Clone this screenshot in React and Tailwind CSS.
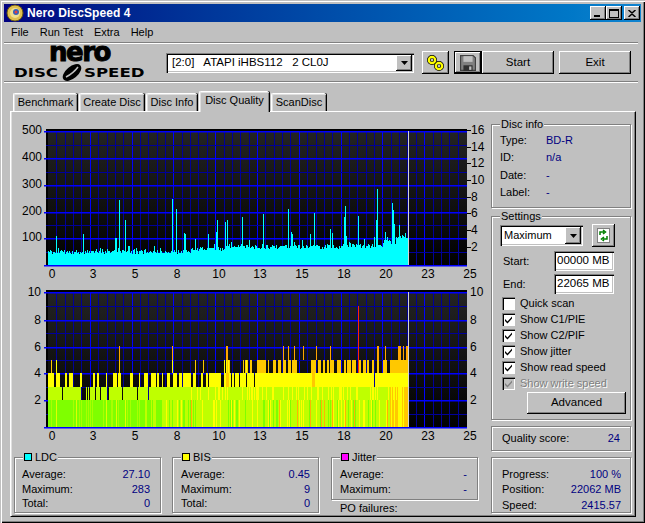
import React from 'react'

const raised = "bg-[#c0c0c0] shadow-[inset_-1px_-1px_0_#000,inset_1px_1px_0_#fff,inset_-2px_-2px_0_#808080]"
const sunken = "bg-white shadow-[inset_1px_1px_0_#808080,inset_2px_2px_0_#000,inset_-1px_-1px_0_#fff,inset_-2px_-2px_0_#c0c0c0]"
const xLabels = [[52, '0'], [93, '3'], [135, '5'], [177, '8'], [219, '10'], [260, '13'], [302, '15'], [344, '18'], [386, '20'], [428, '23'], [470, '25']]

// fixed seed so the chart comes out the same each load
function rng(seed) {
  let s = seed
  return () => {
    s = (s * 1664525 + 1013904223) % 4294967296
    return s / 4294967296
  }
}

function inRanges(x, list) {
  return list.some(r => x >= r[0] && x <= r[1])
}

function Grid({ id, top, bottom, majors, minors }) {
  const vlines = []
  for (let k = 1; k < 50; k++) {
    const x = Math.round(48 + 8.36 * k)
    vlines.push(<rect key={k} x={x} y={top} width="1" height={bottom - top} fill={k % 5 === 0 ? '#0000ff' : '#000098'} />)
  }
  return (
    <g>
      <defs>
        <linearGradient id={id} x1="0" y1="0" x2="0" y2="1">
          <stop offset="0" stopColor="#242424" />
          <stop offset="1" stopColor="#000000" />
        </linearGradient>
      </defs>
      <rect x="46" y={top - 2} width="421" height={bottom - top + 3} fill={`url(#${id})`} />
      <rect x="46" y={top - 2} width="421" height="2" fill="#000" />
      <rect x="46" y={top} width="2" height={bottom - top + 1} fill="#000" />
      {vlines}
      {minors.map(y => <rect key={y} x="46" y={y} width="421" height="1" fill="#000098" />)}
      <g shapeRendering="auto">
        {majors.map(y => <rect key={y} x="44" y={y} width="423" height="1.5" fill="#0000ff" />)}
      </g>
    </g>
  )
}

const ldcSpikes = [[56, 236], [83, 234], [115, 238], [116, 238], [119, 200], [125, 220], [129, 246], [172, 199], [176, 209], [184, 233], [185, 234], [195, 239], [208, 234], [216, 232], [217, 220], [225, 222], [227, 220], [242, 217], [263, 214], [288, 209], [291, 232], [292, 234], [314, 213], [310, 234], [330, 229], [332, 233], [344, 217], [345, 206], [346, 236], [358, 216], [364, 239], [376, 220], [377, 189], [374, 237], [385, 232], [392, 203], [393, 210], [394, 224], [399, 225], [402, 235], [405, 233]]

function LdcChart() {
  const r = rng(7)
  const cols = []
  for (let x = 48; x < 408; x++) {
    let base = 252
    if (x > 190) base = 249
    if (x > 225) base = 247
    if (x > 340) base = 246
    if (x > 382) base = 242
    if (x > 395) base = 237
    let top = base + Math.round(r() * 4 - 2)
    if (r() < 0.12) top -= Math.round(r() * 6)
    const spike = ldcSpikes.find(s => s[0] === x)
    if (spike) top = spike[1]
    cols.push(<rect key={x} x={x} y={top} width="1" height={265 - top} fill="#00ffff" />)
  }
  const right = [[130, '16'], [147, '14'], [163, '12'], [180, '10'], [197, '8'], [213, '6'], [230, '4'], [247, '2']]
  return (
    <svg viewBox="12 122 474 162" width="474" height="162" className="block" shapeRendering="crispEdges">
      <Grid id="g1" top={131} bottom={265} majors={[131, 158, 185, 212, 238, 265]} minors={[145, 172, 198, 225, 252]} />
      {cols}
      <rect x="408" y="131" width="1" height="134" fill="#d4d4d4" />
      {right.map(t => <rect key={t[1]} x="467" y={t[0]} width="4" height="1" fill="#000" />)}
      <g fontSize="12" fill="#000" shapeRendering="auto">
        {[[135, '500'], [162, '400'], [189, '300'], [216, '200'], [242, '100']].map(t => <text key={t[1]} x="42" y={t[0]} textAnchor="end" dy="-1">{t[1]}</text>)}
        {right.map(t => <text key={t[1]} x="471" y={t[0] + 4}>{t[1]}</text>)}
        {xLabels.map(t => <text key={t[1]} x={t[0]} y="278" textAnchor="middle">{t[1]}</text>)}
      </g>
    </svg>
  )
}

const level4 = [[48, 49], [50, 53], [56, 59], [65, 66], [69, 72], [80, 81], [93, 94], [97, 98], [106, 106], [113, 116], [118, 120], [130, 132], [139, 139], [144, 147], [151, 152], [153, 155], [157, 158], [162, 162], [167, 168], [169, 169], [173, 176], [179, 181], [183, 187], [188, 190], [193, 194], [195, 195], [201, 202], [206, 207], [209, 220], [224, 230], [232, 233], [235, 238], [240, 245], [247, 250]]
const gap3 = [62, 81, 82, 83, 84, 85, 87, 89, 95, 100, 107, 108, 122, 137, 148]
const level5Left = [51, 56, 119, 172, 195, 203, 224, 226, 227, 228, 229, 243, 245, 246, 247]
const level5Right = [[250, 251], [257, 265], [268, 268], [273, 275], [278, 280], [283, 285], [288, 290], [292, 296], [311, 315], [318, 320], [323, 324], [327, 328], [330, 333], [337, 340], [344, 345], [347, 350], [352, 355], [358, 360], [363, 365], [367, 368], [372, 373], [377, 378], [383, 386], [390, 408]]
const level6 = [119, 172, 226, 227, 283, 288, 294, 303, 316, 330, 377, 378, 385, 398, 399, 400, 403, 406, 407]

function BisChart() {
  const r = rng(41)
  const y = v => 427 - 13.5 * v
  const rects = []
  const band = (x, a, b, fill) => rects.push(<rect key={`${x}-${a}`} x={x} y={y(b)} width="1" height={y(a) - y(b)} fill={fill} />)
  for (let x = 48; x < 408; x++) {
    const p = r()
    const q = r()
    let low = '#7fff00'
    let mid = '#bfff00'
    if (x < 145) {
      if (p < 0.15) low = '#a8ff00'
      if (p > 0.97) low = '#e0ff00'
    } else if (x < 190) {
      if (p < 0.45) low = '#bfff00'
      if (p > 0.9) low = '#ffff00'
    } else if (x < 390) {
      low = '#bfff00'
      if (p < 0.16) low = '#7fff00'
      if (p > 0.84) low = '#ffff00'
      if (p > 0.95) low = '#ffb400'
      if (q < 0.25) mid = '#ffff00'
    } else {
      low = p < 0.5 ? '#ffff00' : '#ffc800'
      mid = p < 0.6 ? '#ffff00' : '#ffc800'
    }
    band(x, 0, 2, low)
    if (!gap3.includes(x)) band(x, 2, 3, mid)
    if (x < 250) {
      if (inRanges(x, level4)) band(x, 3, 4, x > 225 && x < 229 ? '#ffc800' : '#ffff00')
      if (level5Left.includes(x)) band(x, 4, 5, x % 2 ? '#ffc800' : '#ffff00')
    } else {
      if (x !== 254 && x !== 374) band(x, 3, 4, x > 311 && x < 315 ? '#ffc800' : '#ffff00')
      if (inRanges(x, level5Right)) band(x, 4, 5, '#ffc800')
    }
    if (level6.includes(x)) band(x, 5, 6, '#ffa500')
    if (x === 358) band(x, 4, 9, '#ff2800')
  }
  const leftY = [[296, '10'], [324, '8'], [351, '6'], [377, '4'], [404, '2']]
  return (
    <svg viewBox="12 284 474 162" width="474" height="162" className="block" shapeRendering="crispEdges">
      <Grid id="g2" top={292} bottom={427} majors={[292, 320, 347, 373, 400, 427]} minors={[306, 333, 360, 387, 414]} />
      {rects}
      <rect x="408" y="292" width="1" height="135" fill="#d4d4d4" />
      <g fontSize="12" fill="#000" shapeRendering="auto">
        {leftY.map(t => <text key={t[1]} x="41" y={t[0]} textAnchor="end">{t[1]}</text>)}
        {leftY.map(t => <text key={t[1]} x="470" y={t[0]}>{t[1]}</text>)}
        {xLabels.map(t => <text key={t[1]} x={t[0]} y="440" textAnchor="middle">{t[1]}</text>)}
      </g>
    </svg>
  )
}

function Group({ title, swatch, className, children }) {
  return (
    <div className={`relative border border-[#808080] shadow-[inset_1px_1px_0_#fff,1px_1px_0_#fff] ${className}`}>
      {title && (
        <div className="absolute -top-[8px] left-[8px] flex items-center gap-[3px] bg-[#c0c0c0] px-[1px] leading-[14px]">
          {swatch && <span className={`w-[8px] h-[8px] border border-black ${swatch}`}></span>}
          {title}
        </div>
      )}
      {children}
    </div>
  )
}

function StatRow({ label, value }) {
  return (
    <div className="flex justify-between h-[14.5px] leading-[14px]">
      <span>{label}</span>
      <span className="text-[#000080]">{value}</span>
    </div>
  )
}

function Check({ label, checked, disabled }) {
  return (
    <div className={`flex items-center gap-[5px] h-[16px] pl-[2px] ${disabled ? 'text-[#808080] [text-shadow:1px_1px_0_#fff]' : ''}`}>
      <span className={`w-[13px] h-[13px] flex items-center justify-center shadow-[inset_1px_1px_0_#808080,inset_2px_2px_0_#000,inset_-1px_-1px_0_#fff] ${disabled ? 'bg-[#c0c0c0]' : 'bg-white'}`}>
        {checked && (
          <svg width="9" height="9" viewBox="0 0 9 9">
            <path d="M1 4l2.5 2.5L8 1.5v2L3.5 8.5 1 6z" fill={disabled ? '#808080' : '#000'} />
          </svg>
        )}
      </span>
      {label}
    </div>
  )
}

function Tab({ label, w, active }) {
  return (
    <div className={`relative flex items-center justify-center rounded-t-[2px] border-t border-l border-white shadow-[inset_1px_1px_0_#dfdfdf,1px_0_0_#000,inset_-1px_0_0_#808080] bg-[#c0c0c0] ${active ? 'h-[21px] z-10 -mb-[1px] pb-[3px]' : 'h-[18px]'} ${w}`}>
      {label}
    </div>
  )
}

function Arrow() {
  return (
    <svg width="7" height="4" viewBox="0 0 7 4"><path d="M0 0h7L3.5 4z" fill="#000" /></svg>
  )
}

function App() {
  return (
    <div className="w-[645px] h-[523px] overflow-hidden bg-[#c0c0c0] p-[4px] text-[11px] text-black font-['Liberation_Sans',Arial,sans-serif] shadow-[inset_1px_1px_0_#c0c0c0,inset_2px_2px_0_#fff,inset_-1px_-1px_0_#000,inset_-2px_-2px_0_#808080]">
      {/* title bar */}
      <div className="h-[18px] w-[637px] flex items-center bg-linear-to-r from-[#000080] to-[#1084d0]">
        <svg width="18" height="18" viewBox="0 0 18 18" className="ml-[2px]">
          <circle cx="9" cy="9" r="8" fill="#e0c050" stroke="#6b5a10" />
          <circle cx="9" cy="9" r="5" fill="#f0e090" />
          <circle cx="10" cy="8" r="3" fill="#3060c0" />
          <circle cx="10" cy="8" r="1.5" fill="#e04040" />
        </svg>
        <span className="ml-[3px] text-white font-bold text-[12px] tracking-[0.1px]">Nero DiscSpeed 4</span>
        <div className="ml-auto mr-[1px] flex">
          <div className={`w-[16px] h-[14px] flex items-end pl-[4px] pb-[3px] ${raised}`}><span className="w-[6px] h-[2px] bg-black"></span></div>
          <div className={`w-[16px] h-[14px] flex items-center justify-center ${raised}`}><span className="w-[10px] h-[9px] border border-black border-t-2"></span></div>
          <div className={`ml-[2px] w-[16px] h-[14px] flex items-center justify-center ${raised}`}>
            <svg width="8" height="7" viewBox="0 0 8 7"><path d="M0.5 0L4 3l3.5-3M0.5 7L4 4l3.5 3" stroke="#000" strokeWidth="1.5" fill="none" /></svg>
          </div>
        </div>
      </div>

      {/* menu */}
      <div className="h-[20px] flex items-center gap-[11px] pl-[7px] pt-[1px]">
        <span>File</span>
        <span>Run Test</span>
        <span>Extra</span>
        <span>Help</span>
      </div>
      <div className="h-[2px] w-[634px] border-t border-b border-t-[#808080] border-b-white"></div>

      {/* toolbar */}
      <div className="h-[37px] flex items-center">
        <div className="ml-[10px] w-[131px] flex flex-col items-center">
          <div className="h-[20px] leading-[17px] text-[26px] font-bold font-['DejaVu_Sans',sans-serif] tracking-[-1.5px] [-webkit-text-stroke:1px_#000]">nero</div>
          <div className="h-[17px] w-[131px] flex items-center">
            <span className="w-[46px] inline-block origin-left scale-x-[1.38] text-[12px] font-bold font-['DejaVu_Sans',sans-serif]">DISC</span>
            <svg width="24" height="17" viewBox="0 0 24 17">
              <ellipse cx="12" cy="8.5" rx="11" ry="6" transform="rotate(-40 12 8.5)" fill="#000" />
              <path d="M6 13C10 11 15 7 18 3" stroke="#c0c0c0" strokeWidth="1.5" fill="none" />
            </svg>
            <span className="w-[60px] inline-block origin-left scale-x-[1.38] text-[12px] font-bold font-['DejaVu_Sans',sans-serif]">SPEED</span>
          </div>
        </div>
        <div className={`ml-[21px] w-[248px] h-[20px] flex items-center justify-between pl-[6px] pr-[2px] ${sunken}`}>
          <span className="whitespace-pre text-[11.5px]">[2:0]   ATAPI iHBS112   2 CL0J</span>
          <div className={`w-[16px] h-[16px] flex items-center justify-center ${raised}`}><Arrow /></div>
        </div>
        <div className={`ml-[8px] w-[27px] h-[23px] flex items-center justify-center ${raised}`}>
          <svg width="20" height="18" viewBox="0 0 20 18">
            <circle cx="6" cy="6" r="3.2" fill="none" stroke="#000" strokeWidth="3.6" />
            <circle cx="13" cy="12" r="3.2" fill="none" stroke="#000" strokeWidth="3.6" />
            <circle cx="6" cy="6" r="3.2" fill="none" stroke="#ffff00" strokeWidth="2.2" />
            <circle cx="13" cy="12" r="3.2" fill="none" stroke="#ffff00" strokeWidth="2.2" />
          </svg>
        </div>
        <div className={`ml-[5px] w-[28px] h-[23px] flex items-center justify-center border border-black ${raised}`}>
          <svg width="16" height="16" viewBox="0 0 14 14">
            <path d="M0.5 0.5h11l2 2v11h-13z" fill="#808080" stroke="#404040" />
            <rect x="3" y="1" width="8" height="5" fill="#c0c0c0" />
            <rect x="3" y="9" width="8" height="5" fill="#303030" />
            <rect x="8" y="10" width="2" height="3" fill="#c0c0c0" />
          </svg>
        </div>
        <div className={`w-[72px] h-[23px] flex items-center justify-center text-[11.5px] ${raised}`}>Start</div>
        <div className={`ml-[5px] w-[72px] h-[23px] flex items-center justify-center text-[11.5px] ${raised}`}>Exit</div>
      </div>
      <div className="h-[2px] w-[634px] border-t border-b border-t-[#808080] border-b-white"></div>

      {/* tabs */}
      <div className="h-[28px] flex items-end pl-[9px] gap-[2px]">
        <Tab label="Benchmark" w="w-[64px]" />
        <Tab label="Create Disc" w="w-[65px]" />
        <Tab label="Disc Info" w="w-[51px]" />
        <Tab label="Disc Quality" w="w-[70px]" active />
        <Tab label="ScanDisc" w="w-[55px]" />
      </div>

      <div className="ml-[6px] w-[626px] h-[406px] flex border-t border-l border-t-white border-l-white border-r border-b border-r-black border-b-black shadow-[inset_1px_0_0_#dfdfdf,inset_-1px_-1px_0_#808080]">
        {/* left column */}
        <div className="ml-[1px] w-[474px] pt-[10px]">
          <LdcChart />
          <BisChart />
          <div className="mt-[11px] flex gap-[11px] pl-[2px]">
            <Group title="LDC" swatch="bg-[#00ffff]" className="w-[147px] h-[56px] pt-[9px] pl-[7px] pr-[10px]">
              <StatRow label="Average:" value="27.10" />
              <StatRow label="Maximum:" value="283" />
              <StatRow label="Total:" value="0" />
            </Group>
            <Group title="BIS" swatch="bg-[#ffff00]" className="w-[147px] h-[56px] pt-[9px] pl-[8px] pr-[8px]">
              <StatRow label="Average:" value="0.45" />
              <StatRow label="Maximum:" value="9" />
              <StatRow label="Total:" value="0" />
            </Group>
            <div className="ml-[1px] w-[147px]">
              <Group title="Jitter" swatch="bg-[#ff00ff]" className="h-[43px] pt-[9px] pl-[8px] pr-[10px]">
                <StatRow label="Average:" value="-" />
                <StatRow label="Maximum:" value="-" />
              </Group>
              <div className="mt-[1px] pl-[9px] leading-[14px]">PO failures:</div>
            </div>
          </div>
        </div>

        {/* right column */}
        <div className="ml-[5px] w-[140px] pt-[12px] flex flex-col">
          <Group title="Disc info" className="h-[84px] pt-[6px] pl-[8px]">
            {[['Type:', 'BD-R'], ['ID:', 'n/a'], ['Date:', '-'], ['Label:', '-']].map(r => (
              <div key={r[0]} className="flex h-[17.5px] items-center">
                <span className="w-[46px]">{r[0]}</span>
                <span className="text-[#000080]">{r[1]}</span>
              </div>
            ))}
          </Group>
          <Group title="Settings" className="mt-[8px] h-[204px] pt-[7px] pl-[8px]">
            <div className="flex items-center h-[23px]">
              <div className={`w-[83px] h-[21px] flex items-center justify-between pl-[4px] pr-[2px] ${sunken}`}>
                <span>Maximum</span>
                <div className={`w-[16px] h-[17px] flex items-center justify-center ${raised}`}><Arrow /></div>
              </div>
              <div className={`ml-[9px] w-[23px] h-[23px] flex items-center justify-center ${raised}`}>
                <svg width="13" height="15" viewBox="0 0 13 15">
                  <rect x="0.5" y="0.5" width="12" height="14" fill="#fff" stroke="#808080" />
                  <path d="M3 7V4h4M6 2l2.5 2L6 6" fill="none" stroke="#008000" strokeWidth="1.5" />
                  <path d="M10 8v3H6M7 9l-2.5 2L7 13" fill="none" stroke="#008000" strokeWidth="1.5" />
                </svg>
              </div>
            </div>
            <div className="mt-[4px] w-[114px] flex items-center justify-between pl-[3px]">
              <span>Start:</span>
              <div className={`w-[60px] h-[20px] flex items-center pl-[3px] text-[11.5px] ${sunken}`}>00000 MB</div>
            </div>
            <div className="mt-[3px] w-[114px] flex items-center justify-between pl-[3px]">
              <span>End:</span>
              <div className={`w-[60px] h-[20px] flex items-center pl-[3px] text-[11.5px] ${sunken}`}>22065 MB</div>
            </div>
            <div className="mt-[1px]">
              <Check label="Quick scan" />
              <Check label="Show C1/PIE" checked />
              <Check label="Show C2/PIF" checked />
              <Check label="Show jitter" checked />
              <Check label="Show read speed" checked />
              <Check label="Show write speed" checked disabled />
            </div>
            <div className={`ml-[27px] mt-[1px] w-[99px] h-[22px] flex items-center justify-center text-[11.5px] ${raised}`}>Advanced</div>
          </Group>
          <Group className="mt-[6px] h-[25px] flex items-center justify-between pl-[10px] pr-[10px]">
            <span>Quality score:</span>
            <span className="text-[#000080]">24</span>
          </Group>
          <Group className="mt-[6px] h-[56px] pt-[8px] pl-[10px] pr-[9px]">
            <div className="flex justify-between h-[15.5px] items-center"><span>Progress:</span><span className="text-[#000080]">100 %</span></div>
            <div className="flex justify-between h-[15.5px] items-center"><span>Position:</span><span className="text-[#000080]">22062 MB</span></div>
            <div className="flex justify-between h-[15.5px] items-center"><span>Speed:</span><span className="text-[#000080]">2415.57</span></div>
          </Group>
        </div>
      </div>
    </div>
  )
}

export default App
